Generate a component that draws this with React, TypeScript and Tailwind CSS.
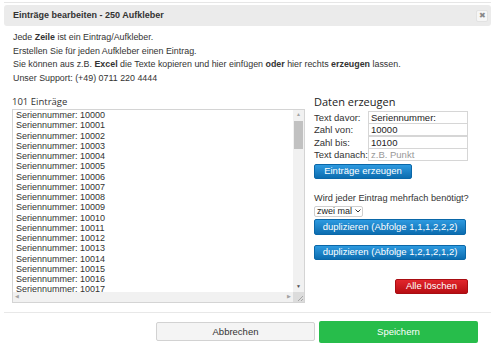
import React from "react";

const lines = Array.from({ length: 18 }, (_, i) => `Seriennummer: ${10000 + i}`);

function BlueButton({ children, className }: { children: React.ReactNode; className?: string }) {
  return (
    <div
      className={
        "flex items-center justify-center rounded-[2px] border border-[#0a67a8] bg-gradient-to-b from-[#2d9ae0] to-[#0b6db0] text-white text-[9.5px] leading-none " +
        (className || "")
      }
    >
      {children}
    </div>
  );
}

export default function App() {
  const arial = { fontFamily: '"Liberation Sans", Arial, sans-serif' };
  const open = { fontFamily: '"Open Sans", "Noto Sans", sans-serif' };
  return (
    <div className="w-[495px] h-[355px] bg-white text-[#333] overflow-hidden" style={arial}>
      <div className="mx-[4px] border-t border-[#e6e6e6] mt-[2px]" />
      {/* header */}
      <div className="mx-[4px] mt-[2px] h-[21px] rounded-[3px] bg-[#ebebeb] flex items-center justify-between pl-[9px] pr-[3px]">
        <span className="text-[9px] font-bold text-[#333]">Einträge bearbeiten - 250 Aufkleber</span>
        <div className="w-[12px] h-[12px] rounded-[2px] bg-[#f6f6f6] border border-[#e2e2e2] flex items-center justify-center text-[8px] text-[#888] leading-none">
          ✖
        </div>
      </div>
      {/* intro */}
      <div className="pl-[13px] mt-[5px] text-[8.9px] leading-[13.5px] text-[#333]">
        <div>
          Jede <b>Zeile</b> ist ein Eintrag/Aufkleber.
        </div>
        <div>Erstellen Sie für jeden Aufkleber einen Eintrag.</div>
        <div>
          Sie können aus z.B. <b>Excel</b> die Texte kopieren und hier einfügen <b>oder</b> hier rechts{" "}
          <b>erzeugen</b> lassen.
        </div>
        <div>Unser Support: (+49) 0711 220 4444</div>
      </div>
      {/* main */}
      <div className="flex mt-[9px]">
        <div className="ml-[12px] w-[293px]">
          <div className="h-[15px] text-[9.5px] leading-[15px] font-medium text-[#333]" style={open}>
            101 Einträge
          </div>
          <div className="relative h-[194px] border border-[#d4d4d4] bg-white overflow-hidden">
            <div className="h-[183px] overflow-hidden pl-[3px] text-[9px] leading-[10.25px] text-[#333] whitespace-nowrap">
              {lines.map((l) => (
                <div key={l}>{l}</div>
              ))}
            </div>
            {/* vertical scrollbar */}
            <div className="absolute right-0 top-0 w-[11px] bottom-[10px] bg-[#f1f1f1] flex flex-col items-center">
              <div className="h-[10px] flex items-center justify-center text-[5px] text-[#a3a3a3]">▲</div>
              <div className="mt-[1px] w-[9px] h-[28px] bg-[#c1c1c1]" />
              <div className="flex-1" />
              <div className="h-[10px] flex items-center justify-center text-[5px] text-[#505050]">▼</div>
            </div>
            {/* horizontal scrollbar */}
            <div className="absolute left-0 bottom-0 right-[11px] h-[10px] bg-[#f1f1f1] flex items-center justify-between px-[2px] text-[5px] text-[#a3a3a3]">
              <span>◀</span>
              <span>▶</span>
            </div>
            <div className="absolute right-0 bottom-0 w-[11px] h-[10px] bg-[#dcdcdc] flex items-end justify-end">
              <svg width="8" height="8" viewBox="0 0 8 8">
                <path d="M7 2 L2 7 M7 5 L5 7" stroke="#999" strokeWidth="0.8" />
              </svg>
            </div>
          </div>
        </div>
        <div className="ml-[9px] w-[160px]">
          <div className="h-[17px] text-[11px] leading-[15px] font-medium text-[#222]" style={open}>
            Daten erzeugen
          </div>
          <div className="flex flex-col">
            {[
              ["Text davor:", "Seriennummer:", false],
              ["Zahl von:", "10000", false],
              ["Zahl bis:", "10100", false],
              ["Text danach:", "z.B. Punkt", true],
            ].map(([label, val, ph]) => (
              <div key={label as string} className="flex items-center h-[12.5px]">
                <span className="w-[54px] text-[9.5px] text-[#333] leading-none">{label}</span>
                <div
                  className={
                    "w-[100px] h-[13px] border border-[#d6d6d6] px-[2px] flex items-center text-[9.5px] leading-none " +
                    (ph ? "text-[#999]" : "text-[#222]")
                  }
                >
                  {val}
                </div>
              </div>
            ))}
          </div>
          <BlueButton className="mt-[2.5px] w-[98px] h-[15px]">Einträge erzeugen</BlueButton>
          <div className="mt-[13px] text-[9.2px] leading-[12px] text-[#333] whitespace-nowrap">
            Wird jeder Eintrag mehrfach benötigt?
          </div>
          <div className="mt-[2px] w-[49px] h-[11px] border border-[#cfcfcf] rounded-[2px] flex items-center pl-[2px] text-[9px] leading-none text-[#222]">
            zwei mal
            <svg className="ml-[3px]" width="6" height="4" viewBox="0 0 6 4">
              <path d="M0.5 0.5 L3 3 L5.5 0.5" stroke="#333" strokeWidth="1" fill="none" />
            </svg>
          </div>
          <BlueButton className="mt-[2px] w-[152px] h-[16px]">duplizieren (Abfolge 1,1,1,2,2,2)</BlueButton>
          <BlueButton className="mt-[10px] w-[152px] h-[15px]">duplizieren (Abfolge 1,2,1,2,1,2)</BlueButton>
          <div className="mt-[19px] ml-[81px] w-[73px] h-[15px] rounded-[2px] border border-[#a80d12] bg-gradient-to-b from-[#e2262c] to-[#b80c12] flex items-center justify-center text-white text-[9.5px] leading-none">
            Alle löschen
          </div>
        </div>
      </div>
      {/* footer */}
      <div className="mx-[4px] mt-[9px] border-t border-[#e8e8e8]" />
      <div className="flex justify-end mt-[8px] mr-[17px] gap-[4px]">
        <div className="w-[159px] h-[19px] mt-[1px] rounded-[2px] border border-[#d2d2d2] bg-[#f4f4f4] flex items-center justify-center text-[9.5px] text-[#333] leading-none">
          Abbrechen
        </div>
        <div className="w-[159px] h-[22px] rounded-[2px] bg-[#27bd4b] flex items-center justify-center text-[9.5px] text-white leading-none">
          Speichern
        </div>
      </div>
    </div>
  );
}
